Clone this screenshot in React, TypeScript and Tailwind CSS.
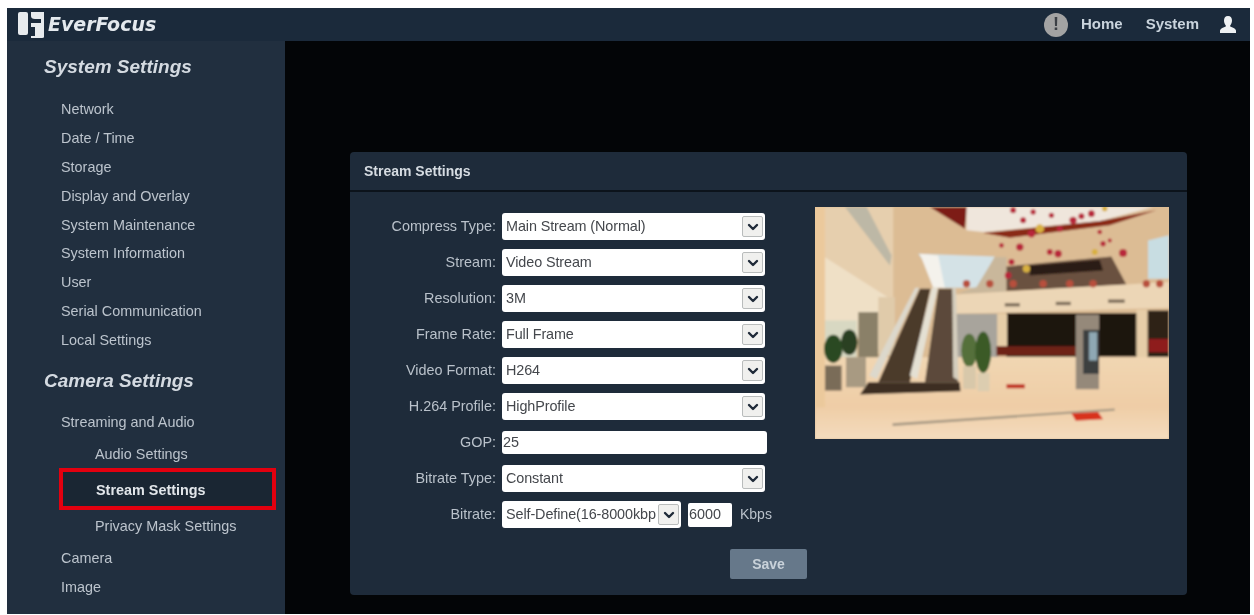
import { ChevronDown } from "lucide-react";

const systemLinks = [
  "Network",
  "Date / Time",
  "Storage",
  "Display and Overlay",
  "System Maintenance",
  "System Information",
  "User",
  "Serial Communication",
  "Local Settings",
];

const flowers = [
  [610, 30, 9], [640, 60, 9], [670, 35, 8], [690, 85, 13], [665, 100, 11], [725, 45, 8], [750, 85, 9], [845, 40, 10],
  [885, 25, 8], [630, 140, 11], [720, 155, 9], [605, 185, 9], [745, 160, 11], [855, 155, 9], [880, 130, 8], [940, 158, 12],
  [790, 60, 11], [575, 135, 7], [650, 205, 11], [595, 225, 10], [900, 120, 6], [870, 95, 7], [815, 48, 9],
];

function LogoMark() {
  return (
    <svg width="26" height="28" viewBox="0 0 26 28" className="shrink-0">
      <rect x="0" y="1" width="10" height="23" rx="2" fill="#e8ebee" />
      <path d="M13 1 H26 V26 Q26 27 24 27 H13 V25 H17 V16 H13 V12 H23 V8 H17 Q13 8 13 5 Z" fill="#e8ebee" />
    </svg>
  );
}

function UserGlyph() {
  return (
    <svg width="18" height="18" viewBox="0 0 18 18" className="ml-[20px] shrink-0">
      <path d="M9 0 C6.2 0 5 2 5 4.6 C5 6.8 5.8 8.4 6.8 9.4 V10.6 C4.5 11.6 1.6 12.4 1 14.6 V17 H17 V14.6 C16.4 12.4 13.5 11.6 11.2 10.6 V9.4 C12.2 8.4 13 6.8 13 4.6 C13 2 11.8 0 9 0 Z" fill="#eef1f3" />
    </svg>
  );
}

function MallPicture() {
  return (
    <svg viewBox="15 20 1063 695" preserveAspectRatio="none" className="h-[232px] w-[354px] shrink-0">
      <defs>
        <filter id="soft" x="-2%" y="-2%" width="104%" height="104%">
          <feGaussianBlur stdDeviation="3.2" />
        </filter>
        <linearGradient id="floor" x1="0" y1="0" x2="0" y2="1">
          <stop offset="0" stopColor="#f1d6b2" />
          <stop offset="0.6" stopColor="#efcda6" />
          <stop offset="1" stopColor="#f4dcbe" />
        </linearGradient>
        <clipPath id="frame">
          <rect x="15" y="20" width="1063" height="695" />
        </clipPath>
      </defs>
      <g clipPath="url(#frame)">
        <g filter="url(#soft)">
          <rect x="5" y="10" width="1083" height="715" fill="#dcbc94" />
          <polygon points="45,20 250,20 250,300 45,170" fill="#e6cfae" />
          <polygon points="105,20 170,20 245,165 240,195" fill="#bdb8a6" />
          <polygon points="360,20 472,20 465,85" fill="#7d1d12" />
          <polygon points="470,20 1030,20 870,62 520,95 470,90" fill="#efe6dc" />
          <polygon points="520,98 870,62 1040,30 900,75 600,112" fill="#8a2a18" />
          <polygon points="325,160 555,168 505,262 400,262" fill="#d4e2e6" />
          <polygon points="330,160 385,165 405,262 370,262" fill="#f4f2ec" />
          <polygon points="555,170 590,170 590,275 440,280 500,260" fill="#c9b79b" />
          <polygon points="590,272 590,198 905,168 950,252" fill="#6a5140" />
          <polygon points="660,195 870,178 880,210 660,225" fill="#2c1c14" />
          <polygon points="1015,120 1078,105 1078,235 1015,235" fill="#c8dde2" />
          <polygon points="435,282 1078,245 1078,322 435,340" fill="#ecd6b6" />
          <rect x="585" y="308" width="45" height="10" fill="#7d6d5a" />
          <rect x="738" y="304" width="45" height="10" fill="#7d6d5a" />
          <rect x="895" y="297" width="50" height="10" fill="#7d6d5a" />
          <rect x="440" y="340" width="125" height="130" fill="#a8a49c" />
          <rect x="590" y="338" width="392" height="130" fill="#1e1510" />
          <rect x="562" y="340" width="30" height="115" fill="#e6cda8" />
          <rect x="980" y="328" width="34" height="145" fill="#e6cda8" />
          <rect x="1014" y="330" width="64" height="140" fill="#2e2018" />
          <rect x="1016" y="415" width="62" height="40" fill="#8e1f1a" />
          <rect x="560" y="437" width="240" height="28" fill="#6e2015" />
          <polygon points="45,170 250,300 250,470 45,360" fill="#efe0c6" />
          <rect x="45" y="360" width="95" height="110" fill="#d8d8c2" />
          <rect x="145" y="335" width="60" height="180" fill="#8a8068" />
          <rect x="205" y="290" width="50" height="170" fill="#e0cbaa" />
          <polygon points="15,470 1078,470 1078,715 15,715" fill="url(#floor)" />
          <rect x="5" y="10" width="40" height="610" fill="#ebc99c" />
          <polygon points="175,545 450,545 452,572 150,582" fill="#3e2f24" />
          <polygon points="330,265 362,265 300,545 205,545" fill="#4c3a2c" />
          <polygon points="385,265 428,265 445,545 345,545" fill="#5c4a3a" />
          <polygon points="316,262 328,262 200,535 178,525" fill="#dcd8cc" />
          <polygon points="366,262 384,262 322,535 300,525" fill="#e4e0d3" />
          <polygon points="427,262 438,262 446,540 430,530" fill="#d4cdbd" />
          <rect x="45" y="495" width="50" height="75" fill="#7a6c58" />
          <ellipse cx="70" cy="445" rx="28" ry="42" fill="#2c4a22" />
          <ellipse cx="118" cy="425" rx="25" ry="38" fill="#2a3f24" />
          <rect x="108" y="470" width="60" height="90" fill="#a89a82" />
          <ellipse cx="478" cy="450" rx="24" ry="50" fill="#54703a" />
          <ellipse cx="520" cy="455" rx="24" ry="62" fill="#3a5a28" />
          <rect x="460" y="497" width="38" height="68" fill="#d8c8aa" />
          <rect x="503" y="517" width="36" height="55" fill="#dccdb0" />
          <rect x="798" y="342" width="70" height="224" fill="#95897a" />
          <rect x="820" y="388" width="48" height="132" fill="#3d3f40" />
          <rect x="838" y="395" width="24" height="85" fill="#8fa8b4" />
          <polygon points="248,668 915,624 915,630 248,676" fill="#a89a84" />
          <polygon points="785,638 865,634 880,656 798,660" fill="#d8321f" />
          <rect x="590" y="551" width="55" height="12" fill="#c02a1c" />
          {flowers.map(([cx, cy, r], i) => (
            <circle key={i} cx={cx} cy={cy} r={r} fill={i % 5 === 3 ? "#d8b040" : "#b8283a"} />
          ))}
          {[470, 540, 610, 700, 780, 850, 1010, 1050].map((cx) => (
            <circle key={cx} cx={cx} cy={250} r={11} fill="#b8503c" />
          ))}
        </g>
      </g>
    </svg>
  );
}

function SelectBox({ value, wide = true }: { value: string; wide?: boolean }) {
  return (
    <div className={`flex h-[27px] items-center overflow-hidden rounded-[3px] bg-white pl-[4px] pr-[2px] ${wide ? "w-[263px]" : "w-[179px]"}`}>
      <span className="flex-1 overflow-hidden whitespace-nowrap text-[14.4px] tracking-[-0.1px] text-[#44474c]">{value}</span>
      <span className="flex h-[21px] w-[21px] shrink-0 items-center justify-center rounded-[2px] border border-[#b9bcbc] bg-[#f0f0ee]">
        <ChevronDown size={16} strokeWidth={3.6} className="text-[#1f2a38]" />
      </span>
    </div>
  );
}

function FormRow({ label, className = "", children }: { label: string; className?: string; children: React.ReactNode }) {
  return (
    <div className={`flex items-center ${className}`}>
      <span className="w-[146px] whitespace-nowrap pr-[6px] text-right text-[14.4px] text-[#b9c1ca]">{label}</span>
      {children}
    </div>
  );
}

export default function App() {
  return (
    <div className="h-[615px] w-[1254px] overflow-hidden bg-white pb-px pl-[7px] pr-[4px] pt-[8px] font-['Liberation_Sans',Arial,sans-serif] blur-[0.5px]">
      <div className="flex h-full flex-col">
        <header className="flex h-[33px] shrink-0 items-center bg-[#1b2a3b] pl-[11px] pr-[13px]">
          <LogoMark />
          <span className="ml-[4px] font-['DejaVu_Sans',sans-serif] text-[19px] font-bold italic text-[#e4e9ee]">EverFocus</span>
          <div className="ml-auto flex items-center text-[15px] font-bold text-[#c9d3dc]">
            <span className="mr-[13px] flex h-[24px] w-[24px] items-center justify-center rounded-full bg-[#a3a3a3] text-[18px] font-bold text-[#3b3f45]">!</span>
            <span>Home</span>
            <span className="ml-[23px]">System</span>
            <UserGlyph />
          </div>
        </header>
        <div className="flex min-h-0 flex-1">
          <aside className="w-[278px] shrink-0 bg-[#212f3f] text-[14.4px] text-[#bcc4cd]">
            <h2 className="ml-[37px] mt-[13px] text-[19px] font-bold italic leading-[26px] text-[#d4dae1]">System Settings</h2>
            <ul className="ml-[54px] mt-[15px]">
              {systemLinks.map((name) => (
                <li key={name} className="h-[28.9px] leading-[28.9px]">{name}</li>
              ))}
            </ul>
            <h2 className="ml-[37px] mt-[13px] text-[19px] font-bold italic leading-[26px] text-[#d4dae1]">Camera Settings</h2>
            <ul className="mt-[14px]">
              <li className="ml-[54px] h-[28px] leading-[28px]">Streaming and Audio</li>
              <li className="ml-[88px] mt-[4px] h-[28px] leading-[28px]">Audio Settings</li>
              <li className="ml-[52px] h-[42px] w-[217px] border-4 border-[#e3000f] bg-[#1a2633] pl-[33px] font-bold leading-[36px] text-[#e2e6ea]">Stream Settings</li>
              <li className="ml-[88px] mt-[2px] h-[28px] leading-[28px]">Privacy Mask Settings</li>
              <li className="ml-[54px] mt-[4px] h-[29px] leading-[29px]">Camera</li>
              <li className="ml-[54px] h-[29px] leading-[29px]">Image</li>
            </ul>
          </aside>
          <main className="flex min-w-0 flex-1 flex-col bg-[#030507] pb-[19px] pl-[65px] pr-[63px] pt-[111px]">
            <section className="flex flex-1 flex-col rounded-[4px] bg-[#1e2b3a]">
              <div className="flex h-[40px] shrink-0 items-center border-b-2 border-[#0c131b] pl-[14px] text-[14px] font-bold text-[#d6dce2]">Stream Settings</div>
              <div className="flex flex-1 pt-[15px]">
                <div className="flex w-[465px] shrink-0 flex-col pl-[6px] pt-[6px]">
                  <FormRow label="Compress Type:"><SelectBox value="Main Stream (Normal)" /></FormRow>
                  <FormRow label="Stream:" className="mt-[9px]"><SelectBox value="Video Stream" /></FormRow>
                  <FormRow label="Resolution:" className="mt-[9px]"><SelectBox value="3M" /></FormRow>
                  <FormRow label="Frame Rate:" className="mt-[9px]"><SelectBox value="Full Frame" /></FormRow>
                  <FormRow label="Video Format:" className="mt-[9px]"><SelectBox value="H264" /></FormRow>
                  <FormRow label="H.264 Profile:" className="mt-[9px]"><SelectBox value="HighProfile" /></FormRow>
                  <FormRow label="GOP:" className="mt-[11px]">
                    <div className="flex h-[23px] w-[265px] items-center rounded-[3px] bg-white pl-[1px] text-[14.4px] text-[#44474c]">25</div>
                  </FormRow>
                  <FormRow label="Bitrate Type:" className="mt-[11px]"><SelectBox value="Constant" /></FormRow>
                  <FormRow label="Bitrate:" className="mt-[9px]">
                    <SelectBox value="Self-Define(16-8000kbp" wide={false} />
                    <div className="ml-[7px] flex h-[24px] w-[44px] items-center rounded-[2px] bg-white pl-[1px] text-[14.4px] text-[#44474c]">6000</div>
                    <span className="ml-[8px] text-[14px] text-[#b9c1ca]">Kbps</span>
                  </FormRow>
                  <button className="ml-[374px] mt-[21px] h-[30px] w-[77px] rounded-[2px] bg-[#66788a] text-[14px] font-bold text-[#c9d2da]">Save</button>
                </div>
                <MallPicture />
              </div>
            </section>
          </main>
        </div>
      </div>
    </div>
  );
}
